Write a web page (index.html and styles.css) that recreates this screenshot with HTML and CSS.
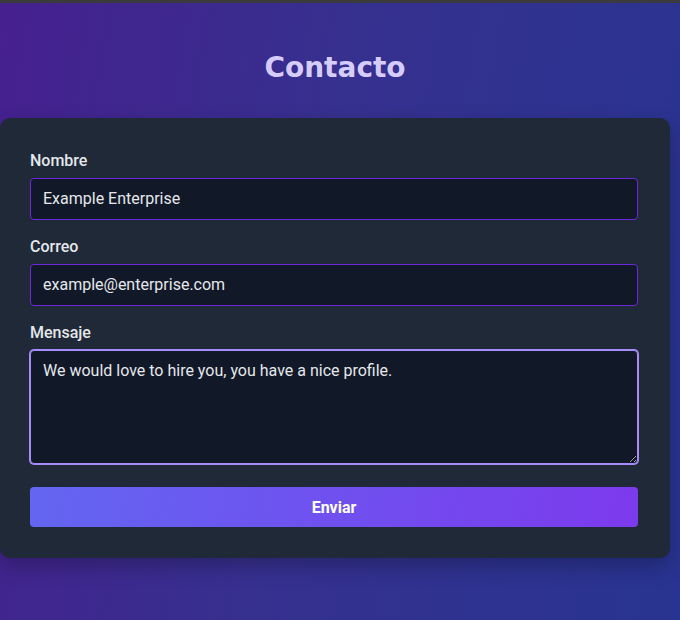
FILE: index.html
```html
<!DOCTYPE html>
<html lang="es">
<head>
<meta charset="utf-8">
<title>Contacto</title>
<link rel="stylesheet" href="styles.css">
</head>
<body>
<div class="topbar"></div>
<main class="page">
  <h1 class="title">Contacto</h1>
  <form class="card">
    <div class="field">
      <label class="label" for="nombre">Nombre</label>
      <input class="input" id="nombre" type="text" value="Example Enterprise">
    </div>
    <div class="field">
      <label class="label" for="correo">Correo</label>
      <input class="input" id="correo" type="email" value="example@enterprise.com">
    </div>
    <div class="field field-last">
      <label class="label" for="mensaje">Mensaje</label>
      <textarea class="input textarea focused" id="mensaje">We would love to hire you, you have a nice profile.</textarea>
    </div>
    <button class="button" type="button">Enviar</button>
  </form>
</main>
</body>
</html>
```

FILE: styles.css
```css
* { box-sizing: border-box; }
html, body { margin: 0; padding: 0; }
body {
  width: 680px;
  height: 620px;
  overflow: hidden;
  background: linear-gradient(100deg, #46208f 0%, #36308f 45%, #283491 100%);
  font-family: Roboto, "Liberation Sans", sans-serif;
}
.topbar {
  height: 3px;
  background: #3b3b3d;
}
.page {
  width: 670px;
  padding-top: 48px;
}
.title {
  margin: 0 0 33px;
  text-align: center;
  font-family: "DejaVu Sans", sans-serif;
  font-weight: 700;
  font-size: 28px;
  line-height: 34px;
  color: #d6cbfd;
}
.card {
  background: #1f2937;
  border-radius: 10px;
  padding: 31px 32px 31px 30px;
  box-shadow: 0 8px 20px rgba(0, 0, 0, 0.25);
}
.field {
  margin-bottom: 15px;
}
.field-last {
  margin-bottom: 23px;
}
.label {
  display: block;
  font-size: 16px;
  font-weight: 500;
  line-height: 24px;
  color: #e5e7eb;
  margin-bottom: 5px;
}
.input {
  display: block;
  width: 100%;
  height: 42px;
  margin: 0;
  padding: 9px 12px 11px;
  background: #111827;
  border: 1px solid #6d28d9;
  border-radius: 4px;
  color: #e5e7eb;
  font-family: Roboto, "Liberation Sans", sans-serif;
  font-size: 16px;
  line-height: 20px;
  outline: none;
}
.textarea {
  height: 114px;
  padding: 10px 12px;
  resize: vertical;
}
.focused {
  border-color: #a78bfa;
  box-shadow: 0 0 0 1px #a78bfa;
}
.button {
  display: block;
  width: 100%;
  height: 40px;
  border: 0;
  border-radius: 4px;
  background: linear-gradient(100deg, #6366f1 0%, #7c3aed 100%);
  color: #ffffff;
  font-family: Roboto, "Liberation Sans", sans-serif;
  font-weight: 700;
  font-size: 16px;
  cursor: pointer;
}
```
